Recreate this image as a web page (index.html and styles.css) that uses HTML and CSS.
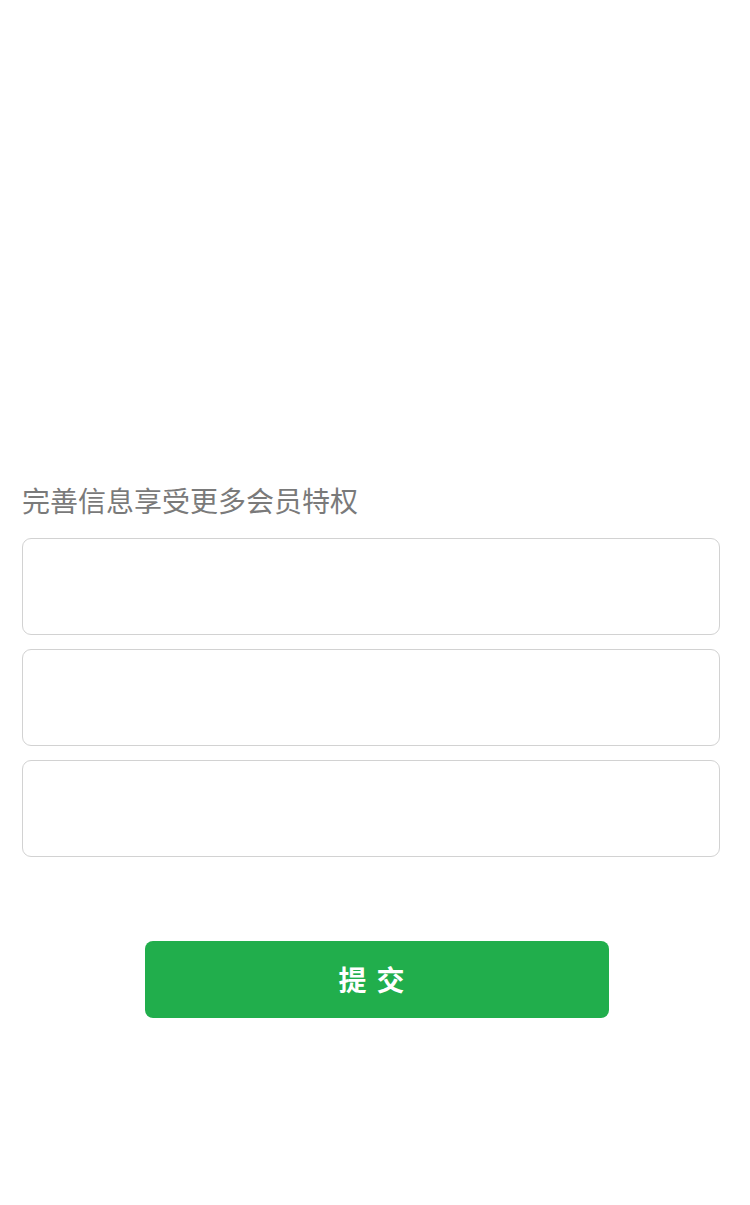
FILE: index.html
```html
<!DOCTYPE html>
<html lang="zh">
<head>
<meta charset="utf-8">
<link rel="stylesheet" href="styles.css">
</head>
<body>
<div class="page">
  <div class="banner"></div>
  <div class="form">
    <div class="title">完善信息享受更多会员特权</div>
    <div class="fields">
      <div class="field"></div>
      <div class="field"></div>
      <div class="field"></div>
    </div>
    <div class="actions">
      <button class="submit">提交</button>
    </div>
  </div>
</div>
</body>
</html>
```

FILE: styles.css
```css
html, body {
  margin: 0;
  padding: 0;
  background: #ffffff;
}
body {
  font-family: "Noto Sans CJK SC", "Noto Sans", sans-serif;
}
.page {
  width: 750px;
}
.banner {
  height: 480px;
}
.form {
  padding: 0 30px 0 22px;
}
.title {
  font-size: 28px;
  line-height: 40px;
  color: #7a7a7a;
  margin-bottom: 18px;
}
.fields {
  display: flex;
  flex-direction: column;
  gap: 14px;
}
.field {
  height: 95px;
  border: 1px solid #d2d2d2;
  border-radius: 9px;
  background: #fff;
}
.actions {
  display: flex;
  justify-content: center;
  padding-left: 11px;
  margin-top: 84px;
}
.submit {
  width: 464px;
  height: 77px;
  border: none;
  border-radius: 8px;
  background: #21ae4c;
  color: #ffffff;
  font-family: "Noto Sans CJK SC", sans-serif;
  font-size: 28px;
  font-weight: 700;
  letter-spacing: 10px;
  line-height: 77px;
  padding: 0 0 4px 0;
}
```
